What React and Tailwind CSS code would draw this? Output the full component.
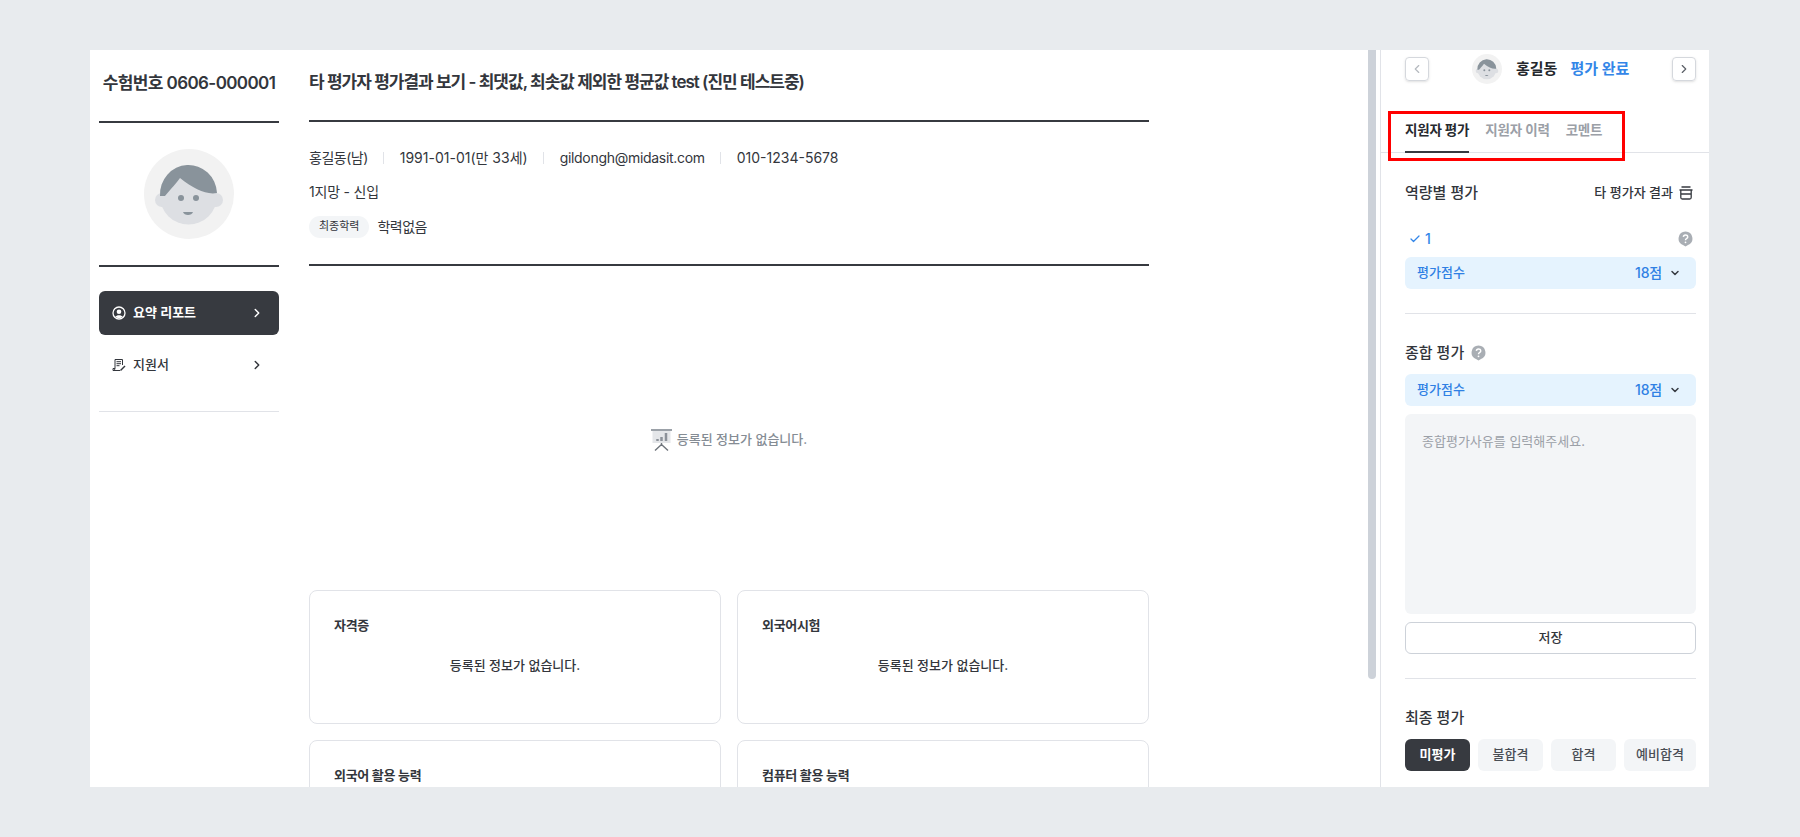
import React from 'react';
import { ChevronLeft, ChevronRight, ChevronDown, Check } from 'lucide-react';

const Avatar = ({ className }) => (
    <svg className={className} viewBox="0 0 90 90">
        <circle cx="45" cy="45" r="45" fill="#f2f2f2" />
        <circle cx="18" cy="51" r="7" fill="#dddfe3" />
        <circle cx="72" cy="51" r="7" fill="#dddfe3" />
        <circle cx="44.5" cy="47" r="28.5" fill="#dddfe3" />
        <path d="M16 47 A28.5 29.5 0 0 1 73 44 C62 46 50 40 36 29 C30 37 24 43 21 47 Z" fill="#89939b" />
        <circle cx="37" cy="49" r="3" fill="#89939b" />
        <circle cx="52" cy="49" r="3" fill="#89939b" />
        <path d="M39 63 H49 C48 67 40 67 39 63 Z" fill="#89939b" />
    </svg>
);

const HelpIcon = ({ className }) => (
    <svg className={`w-[15px] h-[16px] ${className}`} viewBox="0 0 15 16">
        <path d="M7.5 0.5 A7 7 0 0 1 10 14 L7.5 15.5 L5 14 A7 7 0 0 1 7.5 0.5 Z" fill="#a9aeb4" />
        <path d="M5.4 5.9 C5.5 3.4 9.7 3.3 9.7 5.9 C9.7 7.5 7.5 7.5 7.5 9.2" fill="none" stroke="#fff" strokeWidth="1.5" />
        <circle cx="7.5" cy="11.3" r="0.9" fill="#fff" />
    </svg>
);

const ScoreBar = () => (
    <div className="h-8 rounded-md bg-[#e5f3fe] flex items-center pl-3 pr-[15px] text-[13px] font-medium text-[#2f80e4]">
        <span className="flex-1">평가점수</span>
        <span className="text-sm tracking-[-0.2px]">18점</span>
        <ChevronDown className="w-3 h-3 ml-[7px] text-[#373c43]" strokeWidth={3} />
    </div>
);

const Divider = () => <div className="h-0.5 bg-[#373a40]" />;

const InfoCard = ({ title, empty }) => (
    <div className="h-[134px] rounded-lg border border-[#e1e3e8] bg-white px-6 pt-6">
        <p className="text-[13px] leading-5 font-semibold tracking-tight text-[#33363c]">{title}</p>
        {empty && <p className="mt-5 text-center text-[13px] leading-5 font-medium text-[#33363c]">등록된 정보가 없습니다.</p>}
    </div>
);

const App = () => {
    return (
        <div className="h-screen bg-[#e8ebee] pl-[90px] pr-[91px] py-[50px] font-['Inter','Noto_Sans_CJK_KR',sans-serif]">
            <div className="relative h-full bg-white flex overflow-hidden">
                {/* Left menu */}
                <aside className="w-[189px] shrink-0 pl-[9px]">
                    <h1 className="h-[71px] pt-[21px] text-center text-[17px] leading-6 font-semibold tracking-[-0.6px] text-[#33363c] whitespace-nowrap">수험번호 0606-000001</h1>
                    <Divider />
                    <div className="h-[142px] flex items-center justify-center">
                        <Avatar className="w-[90px] h-[90px]" />
                    </div>
                    <Divider />
                    <div className="mt-6 h-11 rounded-md bg-[#373a40] flex items-center pl-[13px] pr-[15px] text-white">
                        <svg className="w-[14px] h-[14px] mr-[7px]" viewBox="0 0 14 14" fill="none" stroke="#fff">
                            <circle cx="7" cy="7" r="6" strokeWidth="1.3" />
                            <circle cx="7" cy="5.7" r="2.3" fill="#fff" stroke="none" />
                            <path d="M3.2 10.7 C4.5 8.6 9.5 8.6 10.8 10.7 C9 12.4 5 12.4 3.2 10.7 Z" fill="#fff" stroke="none" />
                        </svg>
                        <span className="flex-1 text-[13px] font-semibold">요약 리포트</span>
                        <ChevronRight className="w-3.5 h-3.5" strokeWidth={2.5} />
                    </div>
                    <div className="mt-2 h-11 flex items-center pl-[13px] pr-[15px] text-[#33363c]">
                        <svg className="w-[14px] h-[14px] mr-[7px]" viewBox="0 0 14 14" fill="none" stroke="#33363c" strokeWidth="1">
                            <path d="M10.5 7 V1.5 H3 V10 C3 11.5 2.5 12.5 1 12.5 H8" />
                            <path d="M1 12.5 V10.5 H3" />
                            <path d="M4.5 3.7 H9 M4.5 5.7 H9 M4.5 7.7 H7.5" />
                            <path d="M8.5 12.5 L13 8" strokeWidth="1.5" />
                        </svg>
                        <span className="flex-1 text-[13px] font-medium">지원서</span>
                        <ChevronRight className="w-3.5 h-3.5" strokeWidth={2.5} />
                    </div>
                    <div className="mt-6 h-px bg-[#e1e3e8]" />
                </aside>

                {/* Main content */}
                <main className="w-[840px] shrink-0 ml-[30px]">
                    <h2 className="h-[70px] pt-5 text-[17px] leading-6 font-semibold tracking-[-1px] text-[#33363c] whitespace-nowrap">타 평가자 평가결과 보기 - 최댓값, 최솟값 제외한 평균값 test (진민 테스트중)</h2>
                    <Divider />
                    <div className="h-[142px] pt-[26px] text-sm tracking-[-0.2px] text-[#33363c]">
                        <div className="flex items-center h-5">
                            <span className="tracking-[-0.5px]">홍길동(남)</span>
                            <span className="w-px h-3 bg-[#e1e3e8] ml-[15px] mr-4" />
                            <span className="tracking-normal">1991-01-01(만 33세)</span>
                            <span className="w-px h-3 bg-[#e1e3e8] ml-[15px] mr-4" />
                            <span className="tracking-[-0.3px]">gildongh@midasit.com</span>
                            <span className="w-px h-3 bg-[#e1e3e8] ml-[15px] mr-4" />
                            <span className="tracking-normal">010-1234-5678</span>
                        </div>
                        <div className="mt-[14px] h-5 flex items-center">1지망 - 신입</div>
                        <div className="mt-[14px] flex items-center gap-2">
                            <span className="h-[22px] px-[10px] rounded-full bg-[#f3f5f7] flex items-center text-[11px] tracking-normal">최종학력</span>
                            <span className="tracking-[-0.5px]">학력없음</span>
                        </div>
                    </div>
                    <Divider />
                    <div className="h-[324px] pt-6 flex items-center justify-center gap-[5px] text-[13px] font-medium text-[#858c94]">
                        <svg className="w-[21px] h-[22px]" viewBox="0 0 21 22" fill="none">
                            <rect x="1.5" y="1" width="18" height="13" fill="#e4e6e9" />
                            <path d="M0 1 H21" stroke="#9ba1a8" strokeWidth="2" />
                            <path d="M6.5 10 V12 M10.5 8 V12 M15 4 V12" stroke="#8b9199" strokeWidth="2.5" />
                            <path d="M10.5 14 V17 M10.5 15.5 L4 21.5 M10.5 15.5 L17 21.5" stroke="#6f757c" strokeWidth="1.4" />
                        </svg>
                        <span>등록된 정보가 없습니다.</span>
                    </div>
                    <div className="grid grid-cols-2 gap-x-4 gap-y-4">
                        <InfoCard title="자격증" empty />
                        <InfoCard title="외국어시험" empty />
                        <InfoCard title="외국어 활용 능력" />
                        <InfoCard title="컴퓨터 활용 능력" />
                    </div>
                </main>

                {/* Scroll thumb */}
                <div className="w-2 h-[629px] ml-[219px] shrink-0 rounded-b bg-[#cdd2d9]" />

                {/* Evaluation panel */}
                <section className="ml-1 flex-1 border-l border-[#e1e3e8]">
                    <div className="h-[52px] pl-6 pr-[13px] pt-[7px]">
                        <div className="flex items-center h-6">
                            <button type="button" className="w-6 h-6 rounded border border-[#d5d8dd] flex items-center justify-center text-[#b5b9bf] shadow-sm">
                                <ChevronLeft className="w-3.5 h-3.5" />
                            </button>
                            <div className="flex-1 flex items-center">
                                <Avatar className="w-[30px] h-[30px] ml-[43px]" />
                                <span className="ml-[14px] text-[15px] font-semibold text-[#24272c]">홍길동</span>
                                <span className="ml-[13px] text-[15px] font-semibold text-[#3386e8]">평가 완료</span>
                            </div>
                            <button type="button" className="w-6 h-6 rounded border border-[#d5d8dd] flex items-center justify-center text-[#5b6067] shadow-sm">
                                <ChevronRight className="w-3.5 h-3.5" />
                            </button>
                        </div>
                    </div>
                    {/* Tabs */}
                    <div className="relative border-b border-[#e1e3e8] h-[51px]">
                        <div className="pl-6 flex gap-4 text-[13.5px] tracking-[-0.2px] font-semibold h-full items-end">
                            <span className="h-[48px] flex items-center border-b-2 border-[#373a40] text-[#26292e] -mb-px pt-1">지원자 평가</span>
                            <span className="h-[48px] flex items-center text-[#9ba0a7] pt-1">지원자 이력</span>
                            <span className="h-[48px] flex items-center text-[#9ba0a7] pt-1">코멘트</span>
                        </div>
                        <div className="absolute left-[7px] top-[9px] w-[237px] h-[50px] border-[3px] border-[#ff0000]" />
                    </div>
                    <div className="pl-6 pr-[13px]">
                        <div className="mt-[30px] flex items-center justify-between h-5">
                            <span className="text-[15px] font-medium text-[#33363c]">역량별 평가</span>
                            <span className="flex items-center gap-[6px] mr-[3px] text-[13px] font-medium text-[#33363c]">
                                타 평가자 결과
                                <svg className="w-[14px] h-[14px]" viewBox="0 0 14 14" fill="none" stroke="#373a40" strokeWidth="1.3">
                                    <path d="M2.5 1 H11.5 M0.5 4 H13.5 M1.8 4 V11.5 A1.5 1.5 0 0 0 3.3 13 H10.7 A1.5 1.5 0 0 0 12.2 11.5 V4 M1.8 8 H12.2" />
                                </svg>
                            </span>
                        </div>
                        <div className="mt-[26px] h-5 flex items-center justify-between">
                            <span className="flex items-center gap-1 text-sm font-medium text-[#3386e8]">
                                <Check className="w-3 h-3 ml-1" strokeWidth={2.5} />1
                            </span>
                            <HelpIcon className="mr-[3px]" />
                        </div>
                        <div className="mt-2"><ScoreBar /></div>
                        <div className="mt-6 h-px bg-[#e1e3e8]" />
                        <div className="mt-[29px] h-5 flex items-center gap-[7px]">
                            <span className="text-[15px] font-medium text-[#33363c]">종합 평가</span>
                            <HelpIcon />
                        </div>
                        <div className="mt-[11px]"><ScoreBar /></div>
                        <div className="mt-2 h-[200px] rounded-md bg-[#f3f5f7] px-[17px] py-[18px] text-[13px] text-[#9ba0a7]">종합평가사유를 입력해주세요.</div>
                        <button type="button" className="mt-2 w-full h-8 rounded-md border border-[#cdd2d9] text-[13px] font-medium text-[#33363c]">저장</button>
                        <div className="mt-6 h-px bg-[#e1e3e8]" />
                        <p className="mt-[29px] h-5 flex items-center text-[15px] font-medium text-[#33363c]">최종 평가</p>
                        <div className="mt-[11px] flex gap-2 text-[13px] font-medium">
                            <span className="w-[65px] h-8 rounded-md bg-[#373a40] text-white font-semibold flex items-center justify-center">미평가</span>
                            <span className="w-[65px] h-8 rounded-md bg-[#f3f5f7] text-[#4a4e55] flex items-center justify-center">불합격</span>
                            <span className="w-[65px] h-8 rounded-md bg-[#f3f5f7] text-[#4a4e55] flex items-center justify-center">합격</span>
                            <span className="w-[72px] h-8 rounded-md bg-[#f3f5f7] text-[#4a4e55] flex items-center justify-center">예비합격</span>
                        </div>
                    </div>
                </section>
            </div>
        </div>
    );
};

export default App;
